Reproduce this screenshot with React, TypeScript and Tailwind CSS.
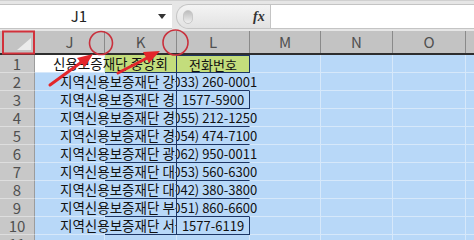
import React from "react";

const rows = [
  { j: "신용보증재단 중앙회", l: "전화번호", title: true, box: true },
  { j: "지역신용보증재단 강원", l: "(033) 260-0001" },
  { j: "지역신용보증재단 경기", l: "1577-5900", box: true },
  { j: "지역신용보증재단 경남", l: "(055) 212-1250" },
  { j: "지역신용보증재단 경북", l: "(054) 474-7100" },
  { j: "지역신용보증재단 광주", l: "(062) 950-0011" },
  { j: "지역신용보증재단 대구", l: "(053) 560-6300" },
  { j: "지역신용보증재단 대전", l: "(042) 380-3800" },
  { j: "지역신용보증재단 부산", l: "(051) 860-6600" },
  { j: "지역신용보증재단 서울", l: "1577-6119", box: true },
];

const cols = [
  { name: "J", w: "w-[70px]" },
  { name: "K", w: "w-[72px]" },
  { name: "L", w: "w-[73px]" },
  { name: "M", w: "w-[71px]" },
  { name: "N", w: "w-[72px]" },
  { name: "O", w: "w-[73px]" },
  { name: "", w: "w-[30px]" },
];

function FormulaBar() {
  return (
    <div className="h-[31px] bg-[#e6e6e6] flex pt-[3px] border-t border-[#d0d0d0]">
      <div className="w-[172px] h-[25px] bg-white border-y border-[#c4c4c4] flex items-center">
        <span className="w-[158px] text-center text-[15px] text-[#222]">J1</span>
        <span className="w-0 h-0 border-l-[4px] border-r-[4px] border-t-[5px] border-l-transparent border-r-transparent border-t-[#333]" />
      </div>
      <div className="ml-[4px] w-[94px] h-[25px] flex items-center rounded-l-full border-l border-y border-[#c4c4c4] bg-gradient-to-b from-[#f4f4f4] to-[#e2e2e2]">
        <span className="ml-[6px] w-[10px] h-[14px] rounded-full bg-gradient-to-b from-[#bdbdbd] to-[#f0f0f0] border border-[#c8c8c8]" />
        <span className="ml-[60px] italic font-['Liberation_Serif',serif] text-[14px] font-bold text-[#333]">
          fx
        </span>
      </div>
      <div className="flex-1 h-[25px] bg-white border-y border-l border-[#c4c4c4]" />
    </div>
  );
}

function HeaderRow() {
  return (
    <div className="flex h-[24px] bg-[#c3c3c3] border-b-2 border-[#2e2e2e]">
      <div className="w-[35px] shrink-0 relative border-r border-[#8a8a8a]">
        <svg className="absolute right-[3px] bottom-[3px]" width="14" height="12">
          <polygon points="14,0 14,12 0,12" fill="#ebebeb" />
        </svg>
      </div>
      {cols.map((c, i) => (
        <div
          key={i}
          className={`${c.w} shrink-0 flex items-center justify-center text-[15px] text-[#505050] border-r border-[#8a8a8a]`}
        >
          {c.name}
        </div>
      ))}
    </div>
  );
}

function Row({ n, r }: { n: number; r?: (typeof rows)[number] }) {
  const grid = "border-r border-b border-[#d6e8fa]";
  const navy = "border-[#1d3564]";
  return (
    <div className="flex h-[18px]">
      <div className="w-[35px] shrink-0 bg-[#c8c8c8] border-r border-b border-r-[#9c9c9c] border-b-[#dedede] flex items-center justify-center text-[15px] text-[#505050] leading-none">
        {n}
      </div>
      {/* J */}
      <div className={`w-[70px] shrink-0 ${r?.title ? "bg-white" : "bg-[#b8d8f8]"} ${grid}`}>
        {r && (
          <div
            className={`relative z-[1] w-[141px] h-full overflow-hidden whitespace-nowrap flex items-center text-[13.5px] text-[#111] leading-none ${
              r.title ? "pl-[18px]" : "pl-[25px]"
            }`}
          >
            {r.j}
          </div>
        )}
      </div>
      {/* K */}
      <div
        className={`w-[72px] shrink-0 ${r?.title ? "bg-[#c3dd7c]" : "bg-[#b8d8f8]"} ${
          r ? `border-b border-r ${navy}` : grid
        }`}
      />
      {/* L */}
      <div
        className={`w-[73px] shrink-0 ${r?.title ? "bg-[#c3dd7c]" : "bg-[#b8d8f8]"} ${
          r
            ? `border-b ${navy} border-r ${r.box ? "border-r-[#1d3564]" : "border-r-[#b8d8f8]"} ${
                r.title ? "border-t border-t-[#1d3564]" : ""
              }`
            : grid
        }`}
      >
        {r && (
          <div className="relative z-[1] w-[150px] h-full overflow-hidden whitespace-nowrap">
            <div className="w-[72px] h-full flex items-center justify-center text-[13px] text-[#111] leading-none">
              <span>{r.l}</span>
            </div>
          </div>
        )}
      </div>
      {/* M..P */}
      <div className={`w-[71px] shrink-0 bg-[#b8d8f8] ${grid}`} />
      <div className={`w-[72px] shrink-0 bg-[#b8d8f8] ${grid}`} />
      <div className={`w-[73px] shrink-0 bg-[#b8d8f8] ${grid}`} />
      <div className={`w-[30px] shrink-0 bg-[#b8d8f8] ${grid}`} />
    </div>
  );
}

function Marks() {
  const red = "#e3262b";
  return (
    <svg className="absolute left-0 top-0 z-10" width="474" height="240">
      <rect x="3" y="31.5" width="31" height="22" fill="none" stroke="#d2313b" strokeWidth="2" />
      <circle cx="101" cy="43" r="11.5" fill="none" stroke="#c9303c" strokeWidth="1.6" />
      <circle cx="175.5" cy="42.5" r="12.5" fill="none" stroke="#c9303c" strokeWidth="1.6" />
      <line x1="50" y1="85" x2="83" y2="61" stroke={red} strokeWidth="3" strokeLinecap="round" />
      <polygon points="93,54 77,58 85,67" fill={red} />
      <line x1="118" y1="73" x2="149" y2="57" stroke={red} strokeWidth="3" strokeLinecap="round" />
      <polygon points="160,51 143,52 149,63" fill={red} />
    </svg>
  );
}

export default function App() {
  return (
    <div className="relative w-[474px] h-[240px] overflow-hidden bg-white font-['Noto_Sans_CJK_KR','Noto_Sans',sans-serif]">
      <FormulaBar />
      <HeaderRow />
      {rows.map((r, i) => (
        <Row key={i} n={i + 1} r={r} />
      ))}
      <Row n={11} />
      <Marks />
    </div>
  );
}
